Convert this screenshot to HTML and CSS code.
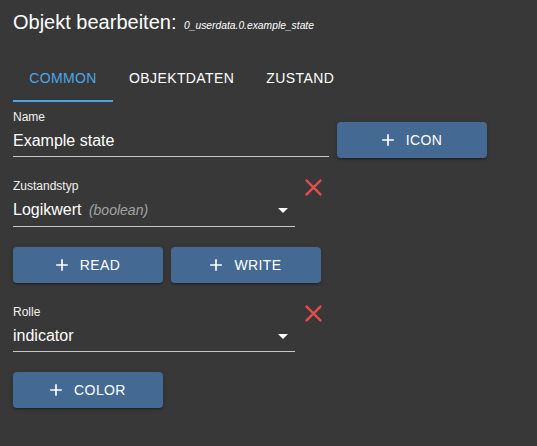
FILE: index.html
```html
<!DOCTYPE html>
<html lang="de">
<head>
<meta charset="utf-8">
<title>Objekt bearbeiten</title>
<link rel="stylesheet" href="styles.css">
</head>
<body>
<div class="dialog">
  <h2 class="title">Objekt bearbeiten: <span class="sub">0_userdata.0.example_state</span></h2>
  <div class="tabs">
    <div class="tab active">Common</div>
    <div class="tab">Objektdaten</div>
    <div class="tab">Zustand</div>
  </div>
  <div class="content">
    <div class="row row-name">
      <div class="field field-name">
        <div class="label">Name</div>
        <div class="input">Example state</div>
      </div>
      <button class="btn btn-icon"><svg class="plus" viewBox="0 0 24 24"><path d="M19 13h-6v6h-2v-6H5v-2h6V5h2v6h6v2z"/></svg>Icon</button>
    </div>
    <div class="row row-field">
      <div class="field field-select">
        <div class="label">Zustandstyp</div>
        <div class="input select">Logikwert <span class="hint">(boolean)</span><svg class="arrow" viewBox="0 0 24 24"><path d="M7 10l5 5 5-5z"/></svg></div>
      </div>
      <svg class="clear" viewBox="5 5 14 14"><path d="M19 6.41L17.59 5 12 10.59 6.41 5 5 6.41 10.59 12 5 17.59 6.41 19 12 13.41 17.59 19 19 17.59 13.41 12z"/></svg>
    </div>
    <div class="row row-btns">
      <button class="btn"><svg class="plus" viewBox="0 0 24 24"><path d="M19 13h-6v6h-2v-6H5v-2h6V5h2v6h6v2z"/></svg>Read</button>
      <button class="btn"><svg class="plus" viewBox="0 0 24 24"><path d="M19 13h-6v6h-2v-6H5v-2h6V5h2v6h6v2z"/></svg>Write</button>
    </div>
    <div class="row row-field">
      <div class="field field-select">
        <div class="label">Rolle</div>
        <div class="input select">indicator<svg class="arrow" viewBox="0 0 24 24"><path d="M7 10l5 5 5-5z"/></svg></div>
      </div>
      <svg class="clear" viewBox="5 5 14 14"><path d="M19 6.41L17.59 5 12 10.59 6.41 5 5 6.41 10.59 12 5 17.59 6.41 19 12 13.41 17.59 19 19 17.59 13.41 12z"/></svg>
    </div>
    <div class="row row-btns">
      <button class="btn"><svg class="plus" viewBox="0 0 24 24"><path d="M19 13h-6v6h-2v-6H5v-2h6V5h2v6h6v2z"/></svg>Color</button>
    </div>
  </div>
</div>
</body>
</html>
```
FILE: styles.css
```css
html, body {
  margin: 0;
  padding: 0;
  background: #383838;
  color: #fff;
  font-family: "Liberation Sans", Arial, sans-serif;
}

.dialog {
  padding: 0 13px;
  min-height: 446px;
  box-sizing: border-box;
}

.title {
  margin: 6px 0 0;
  font-size: 20px;
  line-height: 32px;
  font-weight: normal;
  color: #fff;
}

.sub {
  font-size: 10.3px;
  line-height: 1;
  font-style: italic;
  margin-left: 2px;
}

.tabs {
  display: flex;
  margin-top: 16px;
  height: 48px;
}

.tab {
  position: relative;
  padding: 0 16px;
  min-width: 100px;
  box-sizing: border-box;
  font-size: 14px;
  letter-spacing: 0.4px;
  text-transform: uppercase;
  line-height: 48px;
  text-align: center;
  color: #fff;
}

.tab.active {
  color: #4aa6ea;
}

.tab.active::after {
  content: "";
  position: absolute;
  left: 0;
  right: 0;
  bottom: 0;
  height: 2px;
  background: #4aa6ea;
}

.content {
  margin-top: 8px;
  display: flex;
  flex-direction: column;
}

.row {
  display: flex;
}

.row-name {
  align-items: flex-end;
}

.row-field {
  margin-top: 22px;
  align-items: flex-start;
}

.row-btns {
  margin-top: 20px;
  gap: 8px;
}

.field {
  display: flex;
  flex-direction: column;
}

.field-name {
  width: 316px;
}

.field-select {
  width: 282px;
}

.label {
  font-size: 12px;
  line-height: 14px;
  margin-bottom: 1px;
  color: #f2f2f2;
}

.input {
  position: relative;
  font-size: 16px;
  line-height: 19px;
  padding: 6px 0 6px;
  border-bottom: 1px solid rgba(255, 255, 255, 0.72);
  color: #fff;
  white-space: nowrap;
}

.hint {
  font-size: 14px;
  font-style: italic;
  color: rgba(255, 255, 255, 0.55);
  margin-left: 3px;
}

.arrow {
  position: absolute;
  right: 0;
  top: calc(50% - 12px);
  width: 24px;
  height: 24px;
  fill: #fff;
}

.clear {
  width: 17px;
  height: 17px;
  margin-left: 10px;
  fill: #e24d4d;
}

.btn {
  display: inline-flex;
  align-items: center;
  justify-content: center;
  width: 150px;
  height: 36px;
  padding: 0;
  border: none;
  border-radius: 4px;
  background: #446993;
  color: #fff;
  font-family: "Liberation Sans", Arial, sans-serif;
  font-size: 14px;
  letter-spacing: 0.4px;
  text-transform: uppercase;
  box-shadow: 0 3px 1px -2px rgba(0, 0, 0, 0.2), 0 2px 2px 0 rgba(0, 0, 0, 0.14), 0 1px 5px 0 rgba(0, 0, 0, 0.12);
}

.btn-icon {
  margin-left: 8px;
  margin-bottom: -1px;
}

.plus {
  width: 20px;
  height: 20px;
  margin-left: -4px;
  margin-right: 8px;
  fill: #fff;
}
```
